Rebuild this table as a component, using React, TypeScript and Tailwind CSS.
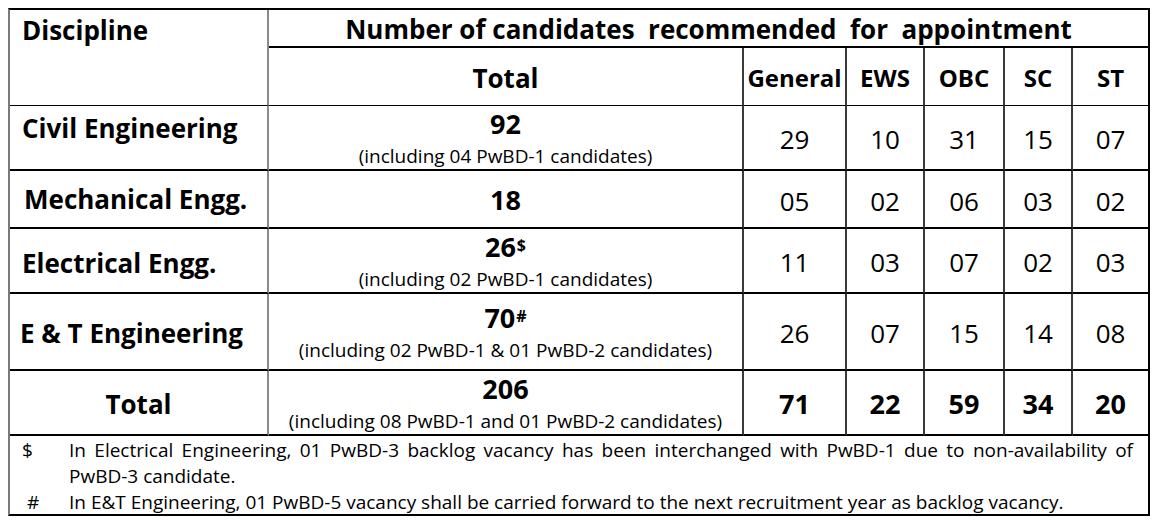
import React from "react";

const font = { fontFamily: '"Open Sans", "Noto Sans", sans-serif' };

type Row = {
  name: string;
  nameClass: string;
  total: string;
  sup?: string;
  sub?: string;
  nums: string[];
  bold?: boolean;
  h: string;
};

const rows: Row[] = [
  { name: "Civil Engineering", nameClass: "items-center justify-start pl-[12px] pb-[20px]", total: "92", sub: "(including 04 PwBD-1 candidates)", nums: ["29", "10", "31", "15", "07"], h: "h-[65px]" },
  { name: "Mechanical Engg.", nameClass: "items-center justify-start pl-[14px]", total: "18", nums: ["05", "02", "06", "03", "02"], h: "h-[58px]" },
  { name: "Electrical Engg.", nameClass: "items-center justify-start pl-[12px] pt-[4px]", total: "26", sup: "$", sub: "(including 02 PwBD-1 candidates)", nums: ["11", "03", "07", "02", "03"], h: "h-[65px]" },
  { name: "E & T Engineering", nameClass: "items-center justify-start pl-[10px] pt-[2px]", total: "70", sup: "#", sub: "(including 02 PwBD-1 & 01 PwBD-2 candidates)", nums: ["26", "07", "15", "14", "08"], h: "h-[77px]" },
  { name: "Total", nameClass: "items-center justify-center pl-[0px] pt-[2px]", total: "206", sub: "(including 08 PwBD-1 and 01 PwBD-2 candidates)", nums: ["71", "22", "59", "34", "20"], bold: true, h: "h-[65px]" },
];

const numBorders = [
  "border-r-2 border-r-[#3a3a3a]",
  "border-r-2 border-r-[#3a3a3a]",
  "border-r-2 border-r-[#3a3a3a]",
  "border-r-2 border-r-[#3a3a3a]",
  "",
];

export default function App() {
  return (
    <div className="w-[1160px] h-[528px] bg-white pt-[8px] pl-[8px] text-black" style={font}>
      <div className="w-[1142px] border-t-2 border-b-2 border-r-2 border-l-2 border-t-black border-b-black border-r-black border-l-[#7a7a7a]">
        <div className="grid grid-cols-[259px_475px_103px_78px_80px_68px_75px]">
          {/* Header */}
          <div className="row-span-2 border-r-2 border-r-[#8a8a8a] border-b border-b-black flex items-start pl-[12px] pt-[4px] text-[26px] font-bold leading-[32px]">
            Discipline
          </div>
          <div className="col-span-6 h-[38px] border-b-2 border-b-black flex items-center justify-center pt-[1px] text-[26px] font-bold leading-[32px] whitespace-pre">
            {"Number of candidates  recommended  for  appointment"}
          </div>
          <div className="h-[58px] border-r-2 border-r-[#3a3a3a] border-b border-b-black flex items-center justify-center pt-[2px] text-[26px] font-bold leading-[32px]">
            Total
          </div>
          {["General", "EWS", "OBC", "SC", "ST"].map((c, i) => (
            <div
              key={c}
              className={`h-[58px] ${numBorders[i]} border-b border-b-black flex items-center justify-center pt-[2px] text-[24px] font-bold leading-[32px]`}
            >
              {c}
            </div>
          ))}

          {rows.map((r) => (
            <React.Fragment key={r.name}>
              <div className={`${r.h} border-r-2 border-r-[#8a8a8a] border-b-2 border-b-black flex ${r.nameClass} text-[26px] font-bold leading-[32px]`}>
                {r.name}
              </div>
              <div className={`${r.h} border-r-2 border-r-[#3a3a3a] border-b-2 border-b-black flex flex-col items-center justify-center pt-[1px]`}>
                <div className="text-[27px] font-bold leading-[32px]">
                  {r.total}
                  {r.sup && <sup className="text-[16px] font-bold relative top-[-6px] ml-[1px]">{r.sup}</sup>}
                </div>
                {r.sub && <div className="text-[19px] leading-[24px] mt-[4px]">{r.sub}</div>}
              </div>
              {r.nums.map((n, i) => (
                <div
                  key={i}
                  className={`${r.h} ${numBorders[i]} border-b-2 border-b-black flex items-center justify-center pt-[3px] leading-[32px] ${r.bold ? "font-bold text-[27px]" : "text-[26px]"}`}
                >
                  {n}
                </div>
              ))}
            </React.Fragment>
          ))}

          {/* Footnotes */}
          <div className="col-span-7 h-[78px] pt-[1px] text-[19px] leading-[26px]">
            <div className="flex">
              <div className="w-[59px] pl-[12px] shrink-0">$</div>
              <div className="w-[1064px] text-justify">
                In Electrical Engineering, 01 PwBD-3 backlog vacancy has been interchanged with PwBD-1 due to non-availability of PwBD-3 candidate.
              </div>
            </div>
            <div className="flex">
              <div className="w-[59px] pl-[17px] shrink-0">#</div>
              <div>In E&amp;T Engineering, 01 PwBD-5 vacancy shall be carried forward to the next recruitment year as backlog vacancy.</div>
            </div>
          </div>
        </div>
      </div>
    </div>
  );
}
